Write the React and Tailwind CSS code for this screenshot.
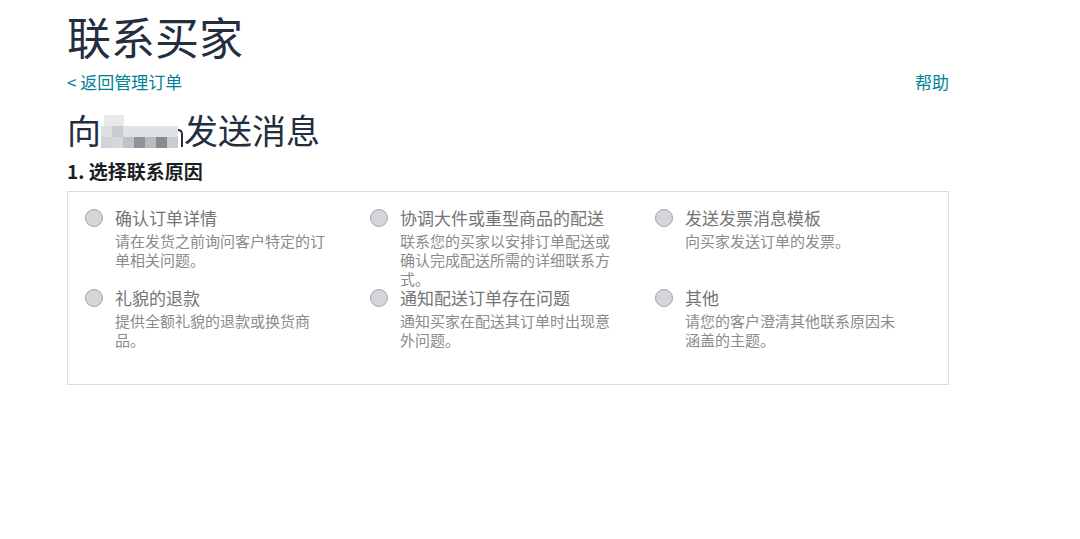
import React from "react";

const font = {
  fontFamily: '"Noto Sans CJK SC", "Noto Sans", sans-serif',
};

const reasons = [
  { title: "确认订单详情", desc: "请在发货之前询问客户特定的订单相关问题。" },
  { title: "协调大件或重型商品的配送", desc: "联系您的买家以安排订单配送或确认完成配送所需的详细联系方式。" },
  { title: "发送发票消息模板", desc: "向买家发送订单的发票。" },
  { title: "礼貌的退款", desc: "提供全额礼貌的退款或换货商品。" },
  { title: "通知配送订单存在问题", desc: "通知买家在配送其订单时出现意外问题。" },
  { title: "其他", desc: "请您的客户澄清其他联系原因未涵盖的主题。" },
];

// pixelated name placeholder (blurred in the screenshot)
const Blurred = () => (
  <span className="inline-flex items-end">
    <span className="flex flex-col w-[77px] h-[33px] mt-[4px]">
      <span className="flex h-[11px]">
        <span className="w-[3px]" />
        <span className="w-[20px] bg-[#e8e9eb]" />
      </span>
      <span className="flex h-[11px]">
        <span className="w-[11px] bg-[#dcdee1]" />
        <span className="w-[11px] bg-[#c9ccd0]" />
        <span className="w-[55px] bg-[#e0e2e5]" />
      </span>
      <span className="flex h-[11px]">
        <span className="w-[11px] bg-[#d0d4d8]" />
        <span className="w-[11px] bg-[#d5d8dc]" />
        <span className="w-[11px] bg-[#c0c4c8]" />
        <span className="w-[11px] bg-[#8e949b]" />
        <span className="w-[11px] bg-[#b8bcc2]" />
        <span className="w-[11px] bg-[#878c93]" />
        <span className="w-[11px] bg-[#c8ccd2]" />
      </span>
    </span>
    {/* tail of the last letter peeking out of the blur */}
    <span className="w-[5px] h-[18px] mb-[1px] mr-[1px] border-t-[2px] border-r-[2px] border-[#232f3e] rounded-tr-[5px]" />
  </span>
);

const Reason = ({ title, desc }) => (
  <label className="flex items-start gap-[12px] cursor-pointer">
    <span className="mt-[1px] w-[18px] h-[18px] rounded-full bg-[#d5d6d9] border border-[#a3a5a8] shrink-0" />
    <span className="flex flex-col w-[218px]">
      <span className="text-[17px] leading-[20px] text-[#747474]">{title}</span>
      <span className="mt-[3px] text-[15px] leading-[19px] text-[#8b8b8b]">{desc}</span>
    </span>
  </label>
);

export default function App() {
  return (
    <div className="bg-white min-h-[539px] w-[1080px]" style={font}>
      <div className="ml-[67px] w-[882px] pt-[14px]">
        <h1 className="text-[44px] leading-none text-[#232f3e]">联系买家</h1>

        <div className="mt-[15px] flex items-center justify-between text-[17px] leading-[18px] text-[#008296]">
          <a href="#" className="hover:underline">&lt; 返回管理订单</a>
          <a href="#" className="hover:underline">帮助</a>
        </div>

        <h2 className="mt-[20px] text-[34px] leading-[36px] text-[#232f3e] flex items-center">
          向<Blurred />发送消息
        </h2>

        <h3 className="mt-[12px] text-[19px] leading-[22px] font-bold text-[#1a1f26]">1. 选择联系原因</h3>

        <div className="mt-[9px] border border-[#dcdcdc] pl-[17px] pt-[16px] pb-[35px]">
          <div className="grid grid-cols-[285px_285px_285px] gap-y-0">
            {reasons.map((r) => (
              <Reason key={r.title} {...r} />
            ))}
          </div>
        </div>
      </div>
    </div>
  );
}
